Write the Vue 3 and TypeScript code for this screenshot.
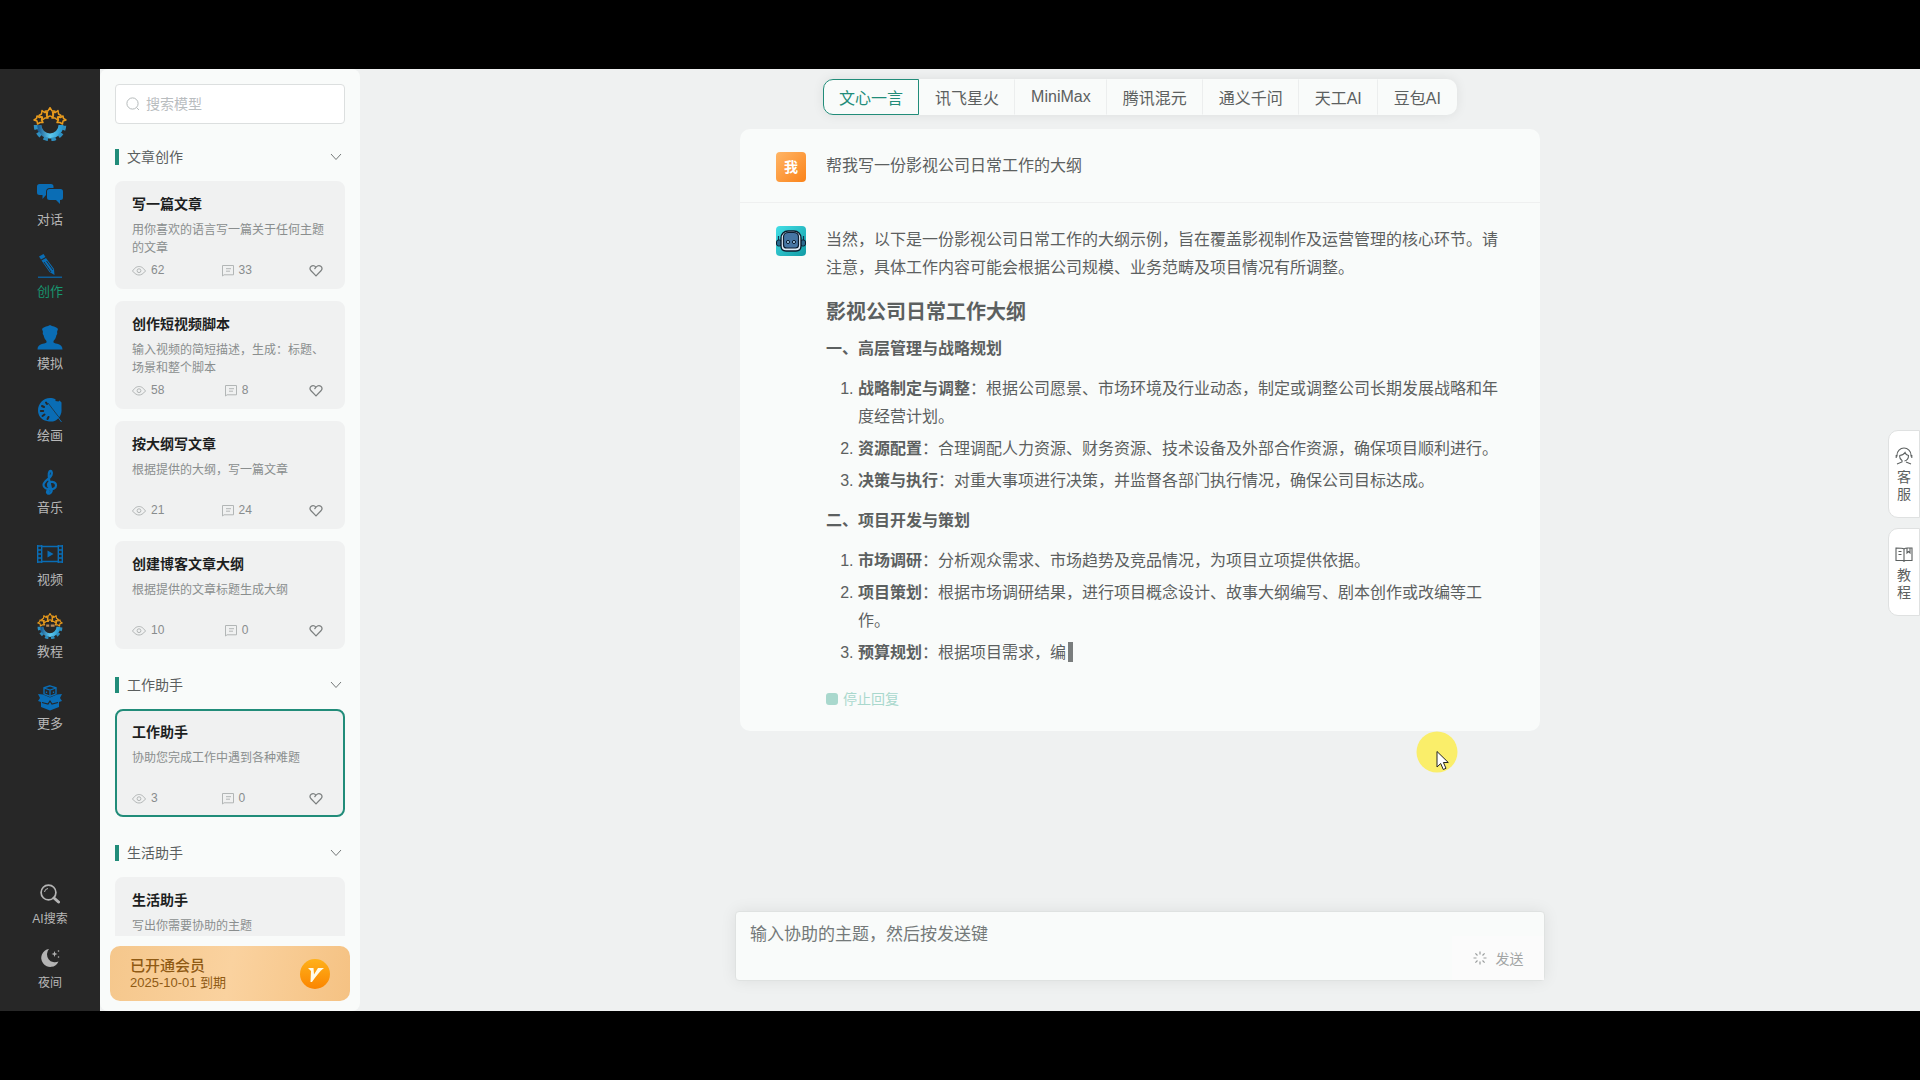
<script setup lang="ts">
import { ref } from 'vue'

interface NavItem {
  key: string
  label: string
}

interface Tool {
  title: string
  desc: string
  views?: number
  comments?: number
}

interface Section {
  name: string
  tools: Tool[]
}

interface Item {
  term: string
  text: string
}

interface Chapter {
  title: string
  items: Item[]
}

const navItems: NavItem[] = [
  { key: 'chat', label: '对话' },
  { key: 'write', label: '创作' },
  { key: 'role', label: '模拟' },
  { key: 'paint', label: '绘画' },
  { key: 'music', label: '音乐' },
  { key: 'video', label: '视频' },
  { key: 'course', label: '教程' },
  { key: 'more', label: '更多' },
]
const activeNav = ref('write')

const sections: Section[] = [
  {
    name: '文章创作',
    tools: [
      { title: '写一篇文章', desc: '用你喜欢的语言写一篇关于任何主题的文章', views: 62, comments: 33 },
      { title: '创作短视频脚本', desc: '输入视频的简短描述，生成：标题、场景和整个脚本', views: 58, comments: 8 },
      { title: '按大纲写文章', desc: '根据提供的大纲，写一篇文章', views: 21, comments: 24 },
      { title: '创建博客文章大纲', desc: '根据提供的文章标题生成大纲', views: 10, comments: 0 },
    ],
  },
  {
    name: '工作助手',
    tools: [{ title: '工作助手', desc: '协助您完成工作中遇到各种难题', views: 3, comments: 0 }],
  },
  {
    name: '生活助手',
    tools: [{ title: '生活助手', desc: '写出你需要协助的主题' }],
  },
]
const activeTool = ref('工作助手')

const models: string[] = ['文心一言', '讯飞星火', 'MiniMax', '腾讯混元', '通义千问', '天工AI', '豆包AI']
const activeModel = ref('文心一言')

const chapters: Chapter[] = [
  {
    title: '一、高层管理与战略规划',
    items: [
      { term: '战略制定与调整', text: '根据公司愿景、市场环境及行业动态，制定或调整公司长期发展战略和年度经营计划。' },
      { term: '资源配置', text: '合理调配人力资源、财务资源、技术设备及外部合作资源，确保项目顺利进行。' },
      { term: '决策与执行', text: '对重大事项进行决策，并监督各部门执行情况，确保公司目标达成。' },
    ],
  },
  {
    title: '二、项目开发与策划',
    items: [
      { term: '市场调研', text: '分析观众需求、市场趋势及竞品情况，为项目立项提供依据。' },
      { term: '项目策划', text: '根据市场调研结果，进行项目概念设计、故事大纲编写、剧本创作或改编等工作。' },
      { term: '预算规划', text: '根据项目需求，编' },
    ],
  },
]

const isTyping = (c: number, i: number): boolean =>
  c === chapters.length - 1 && i === chapters[c].items.length - 1

const search = ref('')
const prompt = ref('')
</script>

<template>
  <div class="screen">
    <svg class="defs" aria-hidden="true">
      <defs>
        <linearGradient id="gear-blue" x1="0" y1="0" x2="1" y2="0">
          <stop offset="0" stop-color="#1d5f93" />
          <stop offset="0.5" stop-color="#5fc9ee" />
          <stop offset="1" stop-color="#2b9ad0" />
        </linearGradient>
        <symbol id="brand" viewBox="0 0 34 34">
          <path d="M6 18a11 11 0 0 0 22 0" fill="none" stroke="url(#gear-blue)" stroke-width="5" />
          <path d="M2.500 18a14.500 14.500 0 0 0 29 0" fill="none" stroke="#2f8fc0" stroke-width="3.500" stroke-dasharray="4.500 3.500" />
          <g fill="none" stroke="#e79a1d" stroke-width="1.500" stroke-linejoin="round">
            <path d="M4 9l2.500 1.500 3-.500-1 3 1.500 2.500H7l-2.500 1.500-.500-3-3-1 2.500-1.500z" />
            <path d="M9 3.500l2.500 2 3-.500-1 3 1.500 3-3 0-2.500 2-1-3-2.500-1.500 2.500-1.500z" />
            <path d="M17 .700l1.800 3 3.200.600-2.200 2.600.300 3.300-3.100-1.300-3.100 1.300.300-3.300-2.200-2.600 3.200-.600z" />
            <path d="M25 3.500l-2.500 2-3-.500 1 3-1.500 3 3 0 2.500 2 1-3 2.500-1.500-2.500-1.500z" />
            <path d="M30 9l-2.500 1.500-3-.500 1 3-1.500 2.500h3l2.500 1.500.500-3 3-1-2.500-1.500z" />
          </g>
        </symbol>
      </defs>
    </svg>

    <div class="app">
      <nav class="rail" aria-label="主导航">
        <svg class="logo" viewBox="0 0 34 34" aria-hidden="true"><use href="#brand" /></svg>

        <div class="rail-main">
          <button
            v-for="item in navItems"
            :key="item.key"
            type="button"
            class="rail-item"
            :class="{ active: item.key === activeNav }"
            @click="activeNav = item.key"
          >
            <svg v-if="item.key === 'chat'" class="rail-icon" viewBox="0 0 26 26" aria-hidden="true">
              <path d="M2.500 3h11.500a2.500 2.500 0 0 1 2.500 2.500V7H13a4 4 0 0 0-4 4v3l-3.500 4v-4h-3A2.500 2.500 0 0 1 0 11.500v-6A2.500 2.500 0 0 1 2.500 3z" />
              <path d="M12.500 8h11A2.500 2.500 0 0 1 26 10.500v6a2.500 2.500 0 0 1-2.500 2.500H23v4l-4-4h-6.500a2.500 2.500 0 0 1-2.500-2.500v-6A2.500 2.500 0 0 1 12.500 8z" />
            </svg>
            <svg v-else-if="item.key === 'write'" class="rail-icon" viewBox="0 0 26 26" aria-hidden="true">
              <path d="M2 3.500L6.500 1l2 3L4 6.500zM4.500 7.500L9 5l8 11 .500 6-5-3z" />
              <path d="M7 9l7 10M9.500 8l6.500 9" stroke="#272727" stroke-width="0.900" />
              <path d="M1 24.200h24" stroke="#0a6db5" stroke-width="1.200" />
            </svg>
            <svg v-else-if="item.key === 'role'" class="rail-icon" viewBox="0 0 26 26" aria-hidden="true">
              <path d="M13 0l2 1c3 .500 5 1.500 6 3l-1 3c.500 1 .300 2.500-.500 3-.500 2.500-1.500 4.500-3 6v1.500c2 1.500 9 1 9 7H.500c0-6 7-5.500 9-7V16c-1.500-1.500-2.500-3.500-3-6-.800-.500-1-2-.500-3L5 4c1-1.500 3-2.500 6-3z" />
            </svg>
            <svg v-else-if="item.key === 'paint'" class="rail-icon" viewBox="0 0 26 26" aria-hidden="true">
              <path d="M13 1c2 0 4 .500 5.500 1.200L18.500 4l3 .500 1-1 2 2v6c.600 6-2.500 10.500-7 12.500-2 .800-5 .800-7.500 0C4 23 1 18.500 1 13.500 1 7 6 1 13 1z" />
              <g stroke="#272727" stroke-width="2" stroke-linecap="round">
                <path d="M9 5.500l1 1.500M5 9l2 1M3.800 14h2.400M5.500 19l2-1.500M10.500 22l1-2" />
              </g>
              <path d="M11 6l13 17" stroke="#272727" stroke-width="0.700" />
              <path d="M20 19l4.500 6" stroke="#0a6db5" stroke-width="1" />
            </svg>
            <svg v-else-if="item.key === 'music'" class="rail-icon" viewBox="0 0 26 26" aria-hidden="true">
              <g fill="none" stroke="#0a6db5" stroke-width="2.200" stroke-linecap="round">
                <path d="M14.500 22C13 14 10 6 12.500 2.500 14 .500 15.500 3 14.500 6 13 10 6.500 11.500 6.500 16c0 5.500 12.500 6 12.500.500 0-4.500-7.500-5-8-1-.200 1.500.500 2.500 1.500 3" />
                <path d="M14.500 21c.500 4-3.500 4.500-4.500 2.500" />
              </g>
              <circle cx="11" cy="22.500" r="2" />
            </svg>
            <svg v-else-if="item.key === 'video'" class="rail-icon" viewBox="0 0 26 26" aria-hidden="true">
              <g fill="none" stroke="#0a6db5" stroke-width="1.400">
                <path d="M.700 4v18M4.700 4v18M21.300 4v18M25.300 4v18M4.700 5.500h16.600M4.700 20.500h16.600" />
                <path d="M.700 5h4M.700 9h4M.700 13h4M.700 17h4M.700 21h4M21.300 5h4M21.300 9h4M21.300 13h4M21.300 17h4M21.300 21h4" />
              </g>
              <path d="M10.500 9.500l6 3.500-6 3.500z" />
            </svg>
            <svg v-else-if="item.key === 'course'" class="rail-icon" viewBox="0 0 34 34" aria-hidden="true">
              <use href="#brand" />
              <path d="M12 16.500h4M18 16.500h5" stroke="#b98a5a" stroke-width="3" />
            </svg>
            <svg v-else class="rail-icon" viewBox="0 0 26 26" aria-hidden="true">
              <path d="M1 9l5 .500 7 3 7-3 5-.500-2 4 2 3-3 1v5l-9 3.500L4 22v-5l-3-1 2-3z" />
              <path d="M13 .800l6 2v6l-6 2.500-6-2.500v-6z" fill="#272727" stroke="#0a6db5" stroke-width="1.400" />
              <path d="M7 3l6 2 6-2M13 5v6M9.500 6.500v1.500M16.500 6.500v1.500" fill="none" stroke="#0a6db5" stroke-width="1.300" />
              <path d="M5 17.500l6 1.500 2-3 2 3 6-1.500" fill="none" stroke="#272727" stroke-width="1.200" />
            </svg>
            <span>{{ item.label }}</span>
          </button>
        </div>

        <div class="rail-foot">
          <button type="button" class="rail-item small">
            <svg class="foot-icon" viewBox="0 0 20 20" aria-hidden="true">
              <circle cx="8.500" cy="8.500" r="7.400" fill="none" stroke="#b4b4b4" stroke-width="1.700" />
              <path d="M4.500 8a4 4 0 0 1 3.500-3.500" fill="none" stroke="#b4b4b4" />
              <path d="M14 14l4.500 4" stroke="#b4b4b4" stroke-width="3" stroke-linecap="round" />
            </svg>
            <span>AI搜索</span>
          </button>
          <button type="button" class="rail-item small">
            <svg class="foot-icon" viewBox="0 0 20 20" aria-hidden="true">
              <path d="M9 1a8 8 0 0 0 9.500 12.500A9 9 0 1 1 9 1z" fill="#b4b4b4" />
              <path d="M14.500 3l.800 2.200 2.200.800-2.200.800-.800 2.200-.800-2.200-2.200-.800 2.200-.800z" fill="#b4b4b4" />
              <circle cx="18.500" cy="3" r="0.800" fill="#b4b4b4" />
              <circle cx="18.500" cy="9" r="0.800" fill="#b4b4b4" />
            </svg>
            <span>夜间</span>
          </button>
        </div>
      </nav>

      <aside class="panel">
        <label class="search">
          <svg viewBox="0 0 14 14" aria-hidden="true">
            <circle cx="6.500" cy="6.500" r="5.600" />
            <path d="M10.500 10.500l2.500 2.500" />
          </svg>
          <input v-model="search" type="text" placeholder="搜索模型" aria-label="搜索模型" />
        </label>

        <div class="tool-list">
          <section v-for="section in sections" :key="section.name" class="group">
            <h2 class="group-head">
              <span>{{ section.name }}</span>
              <svg viewBox="0 0 12 8" aria-hidden="true"><path d="M1 1l5 5.500L11 1" /></svg>
            </h2>
            <div class="cards">
              <article
                v-for="tool in section.tools"
                :key="tool.title"
                class="card"
                :class="{ selected: tool.title === activeTool }"
                @click="activeTool = tool.title"
              >
                <h3>{{ tool.title }}</h3>
                <p>{{ tool.desc }}</p>
                <div v-if="tool.views !== undefined" class="stats">
                  <span class="stat">
                    <svg class="eye" viewBox="0 0 14 14" aria-hidden="true">
                      <path d="M.500 8C3 4.500 5 3.500 7 3.500S11 4.500 13.500 8C11 11 9 12 7 12S3 11 .500 8z" />
                      <circle cx="7" cy="7.700" r="1.900" />
                    </svg>
                    {{ tool.views }}
                  </span>
                  <span class="stat">
                    <svg class="note" viewBox="0 0 12 14" aria-hidden="true">
                      <path d="M.500 13v-10.500h11v9.300h-9.500zM4 5.700h5M4 8.200h4" />
                    </svg>
                    {{ tool.comments }}
                  </span>
                  <button type="button" class="like" aria-label="收藏">
                    <svg viewBox="0 0 14 14" aria-hidden="true">
                      <path d="M7 12.800L1.800 7.500C-.500 4.500 3.500.500 7 4.200 10.500.500 14.500 4.500 12.200 7.500zM7 4.200L5.500 6" />
                    </svg>
                  </button>
                </div>
              </article>
            </div>
          </section>
        </div>

        <div class="vip">
          <div>
            <strong>已开通会员</strong>
            <span>2025-10-01 到期</span>
          </div>
          <svg viewBox="0 0 30 30" aria-hidden="true">
            <defs>
              <linearGradient id="coin" x1="0" y1="0" x2="0" y2="1">
                <stop offset="0" stop-color="#ffb11a" />
                <stop offset="1" stop-color="#fb8500" />
              </linearGradient>
            </defs>
            <circle cx="15" cy="15" r="15" fill="url(#coin)" />
            <path d="M8 9h5.500l.500 6.500L18 9h6c-4 3-8 8-12 14h-1.500L11 12z" fill="#fffbe8" />
          </svg>
        </div>
      </aside>

      <main class="main">
        <div class="models" role="tablist">
          <button
            v-for="model in models"
            :key="model"
            type="button"
            role="tab"
            :aria-selected="model === activeModel"
            :class="{ on: model === activeModel }"
            @click="activeModel = model"
          >{{ model }}</button>
        </div>

        <div class="chat">
          <div class="message question">
            <div class="avatar me">我</div>
            <p>帮我写一份影视公司日常工作的大纲</p>
          </div>
          <div class="message answer">
            <svg class="avatar" viewBox="0 0 30 30" aria-hidden="true">
              <defs>
                <linearGradient id="bot" x1="0" y1="0" x2="1" y2="1">
                  <stop offset="0" stop-color="#43dfe6" />
                  <stop offset="1" stop-color="#129ba5" />
                </linearGradient>
              </defs>
              <rect width="30" height="30" fill="url(#bot)" />
              <path d="M2.500 10v6M27.500 10v6" stroke="#12324f" stroke-width="1.200" />
              <rect x="0.500" y="14" width="5" height="6" rx="2" fill="#2b6a8e" stroke="#0c1d30" />
              <rect x="24.500" y="14" width="5" height="6" rx="2" fill="#2b6a8e" stroke="#0c1d30" />
              <path d="M5 12c0-4 3-7 7-7h6c4 0 7 3 7 7v8c0 3-2 5-5 5H10c-3 0-5-2-5-5z" fill="#dceaf5" stroke="#0c1d30" stroke-width="1.400" />
              <path d="M7.500 11c0-3 2-4.500 5-4.500h5c3 0 5 1.500 5 4.500v8c0 2-1 3-3 3h-9c-2 0-3-1-3-3z" fill="#4675a3" stroke="#0c1d30" stroke-width="1.200" />
              <circle cx="12" cy="16" r="1.600" fill="#9fc7e6" stroke="#0c1d30" />
              <circle cx="18" cy="16" r="1.600" fill="#9fc7e6" stroke="#0c1d30" />
            </svg>
            <div class="reply">
              <p>当然，以下是一份影视公司日常工作的大纲示例，旨在覆盖影视制作及运营管理的核心环节。请注意，具体工作内容可能会根据公司规模、业务范畴及项目情况有所调整。</p>
              <h1>影视公司日常工作大纲</h1>
              <template v-for="(chapter, c) in chapters" :key="chapter.title">
                <h4>{{ chapter.title }}</h4>
                <ol>
                  <li v-for="(item, i) in chapter.items" :key="item.term"><strong>{{ item.term }}</strong>：{{ item.text }}<span v-if="isTyping(c, i)" class="caret"></span></li>
                </ol>
              </template>
              <button type="button" class="stop"><i></i>停止回复</button>
            </div>
          </div>
        </div>

        <form class="composer" @submit.prevent>
          <textarea v-model="prompt" placeholder="输入协助的主题，然后按发送键" aria-label="输入协助的主题"></textarea>
          <button type="submit" class="send">
            <svg viewBox="0 0 14 14" aria-hidden="true">
              <path d="M7 .500v3M7 10.500v3M.500 7h3M10.500 7h3M2.400 2.400l2.100 2.100M9.500 9.500l2.100 2.100M2.400 11.600l2.100-2.100M9.500 4.500l2.100-2.100" />
            </svg>
            发送
          </button>
        </form>
      </main>

      <div class="side">
        <button type="button">
          <svg viewBox="0 0 18 18" aria-hidden="true">
            <path d="M2 9.500V8a7 7 0 0 1 14 0v1.500M1.200 8v3M16.800 8v3M4.500 8.500C7.500 8.500 9 7 10 5.500c.500 1.500 1.500 2.500 3.500 3 0 3-1.500 5-4 5.500M4.500 8.500c0 2.500 1 4 2.500 5v1.500L2 17M11 15l5 2" />
          </svg>
          <span>客服</span>
        </button>
        <button type="button">
          <svg viewBox="0 0 18 18" aria-hidden="true">
            <path d="M9 4C7.500 3 4 3 1 3v12.500h7l1 .800 1-.800h7V3h-2M9 4V16M9 4c1-.700 2-1 3-1M3.500 6.500h3M3.500 9.500h3M12 3v5l1.500-1.500L15 8V3z" />
          </svg>
          <span>教程</span>
        </button>
      </div>

      <svg class="pointer" viewBox="0 0 42 42" aria-hidden="true">
        <circle cx="21" cy="21" r="20.500" fill="#faee6a" />
        <path d="M21 20.500v15.500l3.700-3.500 2.600 6 2.700-1.200-2.600-5.800h4.900z" fill="#fff" stroke="#222" stroke-width="1" />
      </svg>
    </div>
  </div>
</template>

<style>
body {
  margin: 0;
  background: #000;
}
</style>

<style scoped>
* {
  box-sizing: border-box;
}

.screen {
  display: flex;
  height: 100vh;
  padding: 69px 0;
  overflow: hidden;
  background: #000;
  color: #5c6060;
  font-family: "Liberation Sans", "Noto Sans CJK SC", sans-serif;
}

.defs {
  position: absolute;
  width: 0;
  height: 0;
}

h1,
h2,
h3,
h4,
p,
ol {
  margin: 0;
  padding: 0;
}

button,
input,
textarea {
  margin: 0;
  padding: 0;
  border: 0;
  outline: 0;
  background: none;
  color: inherit;
  font: inherit;
}

button {
  cursor: pointer;
}

.app {
  position: relative;
  display: flex;
  flex: 1;
  min-width: 0;
  background: #eff1f1;
}

/* Navigation rail */
.rail {
  display: flex;
  flex: none;
  flex-direction: column;
  align-items: center;
  width: 100px;
  padding: 38px 0 18px;
  background: #272727;
}

.logo {
  width: 34px;
  height: 34px;
  margin-bottom: 40px;
}

.rail-main {
  display: flex;
  flex-direction: column;
  gap: 23px;
}

.rail-foot {
  display: flex;
  flex-direction: column;
  gap: 19px;
  margin-top: auto;
}

.rail-item {
  display: flex;
  flex-direction: column;
  align-items: center;
  gap: 3px;
  color: #b8b8b8;
  font-size: 13px;
  line-height: 20px;
}

.rail-item.small {
  gap: 5px;
  font-size: 12px;
}

.rail-item.active {
  color: #17966f;
}

.rail-icon {
  width: 26px;
  height: 26px;
  fill: #0a6db5;
}

.foot-icon {
  width: 20px;
  height: 20px;
}

/* Tool panel */
.panel {
  display: flex;
  flex: none;
  flex-direction: column;
  width: 260px;
  padding: 15px 10px 10px;
  border-radius: 8px;
  background: #f9fbfa;
}

.search {
  display: flex;
  align-items: center;
  gap: 6px;
  height: 40px;
  margin: 0 5px;
  padding: 0 10px;
  border: 1px solid #dcdfdf;
  border-radius: 4px;
  background: #fff;
}

.search svg {
  flex: none;
  width: 14px;
  height: 14px;
  fill: none;
  stroke: #b5babb;
}

.search input {
  flex: 1;
  min-width: 0;
  font-size: 14px;
}

.search input::placeholder {
  color: #b9bdbf;
  opacity: 1;
}

.tool-list {
  flex: 1;
  min-height: 0;
  padding: 21px 5px 0;
  overflow: hidden;
}

.group {
  margin-bottom: 24px;
}

.group-head {
  display: flex;
  align-items: center;
  justify-content: space-between;
  height: 24px;
  margin-bottom: 12px;
  padding-right: 3px;
  color: #5a5e5e;
  font-size: 14px;
  font-weight: 400;
  line-height: 16px;
}

.group-head span {
  padding-left: 8px;
  border-left: 4px solid #218c79;
}

.group-head svg {
  width: 12px;
  height: 8px;
  fill: none;
  stroke: #747878;
}

.cards {
  display: flex;
  flex-direction: column;
  gap: 12px;
}

.card {
  min-height: 108px;
  padding: 10px 14px 8px 15px;
  border: 2px solid #f0f1f1;
  border-radius: 8px;
  background: #f0f1f1;
}

.card.selected {
  border-color: #218c79;
}

.card h3 {
  color: #1d1f1f;
  font-size: 14px;
  font-weight: 700;
  line-height: 22px;
}

.card p {
  min-height: 36px;
  margin: 6px 0 4px;
  color: #8a8e8e;
  font-size: 12px;
  line-height: 18px;
}

.stats {
  display: flex;
  align-items: center;
  justify-content: space-between;
  padding-right: 6px;
  color: #888c8d;
  font-size: 12px;
  line-height: 18px;
}

.stat {
  display: flex;
  align-items: center;
  gap: 5px;
}

.stats svg {
  display: block;
  width: 14px;
  height: 14px;
  fill: none;
  stroke: #b2b6b6;
}

.stats .note {
  width: 12px;
}

.like svg {
  stroke: #7b7f7f;
  stroke-width: 1.2;
}

.vip {
  display: flex;
  align-items: center;
  justify-content: space-between;
  height: 55px;
  margin-top: 10px;
  padding: 0 20px;
  border-radius: 10px;
  background: linear-gradient(100deg, #f5c78c, #fad29f 50%, #f5c283);
  color: #8f5a14;
  line-height: 17px;
}

.vip strong,
.vip span {
  display: block;
}

.vip strong {
  font-size: 15px;
  font-weight: 500;
}

.vip span {
  font-size: 13px;
}

.vip svg {
  width: 30px;
  height: 30px;
}

/* Conversation */
.main {
  display: flex;
  flex: 1;
  flex-direction: column;
  align-items: center;
  min-width: 0;
  padding: 10px 16px 30px;
}

.models {
  display: flex;
  height: 36px;
  border-radius: 10px;
  background: #f9fbfa;
  box-shadow: 0 0 12px rgba(0, 0, 0, 0.08);
}

.models button {
  padding: 0 15px;
  border: 1px solid transparent;
  border-right-color: #eceeee;
  font-size: 16px;
}

.models button:last-child {
  border-right-color: transparent;
}

.models .on {
  border-color: #218c79;
  border-radius: 10px 0 0 10px;
  color: #218c79;
}

.chat {
  width: 100%;
  max-width: 800px;
  margin-top: 14px;
  border-radius: 10px;
  background: #f9fbfa;
  font-size: 16px;
  line-height: 28px;
}

.message {
  display: flex;
  gap: 20px;
  padding: 23px 36px 22px;
}

.question {
  padding-bottom: 20px;
  border-bottom: 1px solid #eff0f0;
}

.avatar {
  flex: none;
  width: 30px;
  height: 30px;
  border-radius: 4px;
}

.me {
  background: linear-gradient(135deg, #ffb566, #fb8319);
  color: #fff;
  font-size: 14px;
  font-weight: 700;
  line-height: 30px;
  text-align: center;
}

.reply {
  flex: 1;
  min-width: 0;
}

.reply h1 {
  margin: 16px 0 9px;
  font-size: 20px;
  font-weight: 700;
}

.reply h4 {
  font-size: 16px;
  font-weight: 600;
}

.reply strong {
  font-weight: 600;
}

.reply ol {
  display: flex;
  flex-direction: column;
  gap: 4px;
  margin: 12px 0;
  padding-left: 32px;
}

.caret {
  display: inline-block;
  width: 5px;
  height: 20px;
  margin-left: 2px;
  background: #7a7d7d;
  vertical-align: -4px;
}

.stop {
  display: flex;
  align-items: center;
  gap: 5px;
  margin-top: 22px;
  color: #a9d8cd;
  font-size: 14px;
  line-height: 20px;
}

.stop i {
  width: 12px;
  height: 12px;
  border-radius: 3px;
  background: #a9d8cd;
}

.composer {
  display: flex;
  align-items: flex-end;
  width: 100%;
  max-width: 810px;
  height: 70px;
  margin-top: auto;
  border: 1px solid #dfe2e1;
  border-radius: 4px;
  background: #f9fbfa;
  box-shadow: 0 0 16px rgba(0, 0, 0, 0.08);
}

.composer textarea {
  flex: 1;
  height: 68px;
  padding: 11px 14px;
  font-size: 17px;
  line-height: 24px;
  resize: none;
}

.composer textarea::placeholder {
  color: #747979;
  opacity: 1;
}

.send {
  display: flex;
  align-items: center;
  justify-content: center;
  gap: 9px;
  width: 92px;
  height: 44px;
  background: #fbfbfb;
  color: #a2a5a5;
  font-size: 14px;
}

.send svg {
  width: 14px;
  height: 14px;
  fill: none;
  stroke: #9b9e9e;
  stroke-width: 1.2;
}

/* Floating shortcuts on the right edge */
.side {
  position: absolute;
  top: 361px;
  right: 0;
  display: flex;
  flex-direction: column;
  gap: 10px;
}

.side button {
  display: flex;
  flex-direction: column;
  align-items: center;
  gap: 4px;
  width: 32px;
  height: 88px;
  padding-top: 16px;
  border: 1px solid #dfe1e1;
  border-radius: 10px 0 0 10px;
  background: #fff;
  font-size: 14px;
  line-height: 17px;
}

.side svg {
  width: 18px;
  height: 18px;
  fill: none;
  stroke: #5c6060;
  stroke-width: 1.1;
}

.side span {
  width: 14px;
}

.pointer {
  position: absolute;
  top: 662px;
  left: 1416px;
  width: 42px;
  height: 42px;
}
</style>
